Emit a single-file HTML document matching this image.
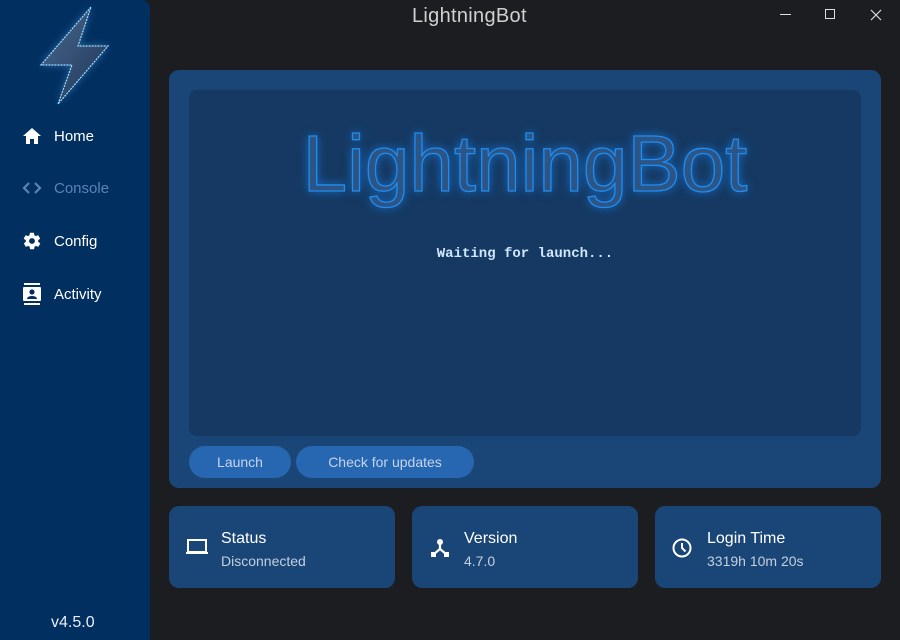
<!DOCTYPE html>
<html><head><style>
*{box-sizing:border-box;margin:0;padding:0}
body{width:900px;height:640px;background:#1c1d21;font-family:"Liberation Sans",sans-serif;position:relative;overflow:hidden;color:#fff}
.side{position:absolute;left:0;top:0;width:150px;height:640px;background:#012f60;border-radius:0 8px 0 0}
.nav{position:absolute;left:22px;font-size:15px;display:flex;align-items:center;gap:12px}
.title{position:absolute;left:412px;top:5px;font-size:20px;color:#d0d0d0;letter-spacing:.3px}
.card{position:absolute;background:#1a4677;border-radius:10px}
.inner{position:absolute;left:189px;top:90px;width:672px;height:346px;background:#153962;border-radius:8px}
.big{position:absolute;left:0;width:672px;top:28px;text-align:center;font-size:80px;font-weight:normal;color:#2c5585;-webkit-text-stroke:1.3px #1f8cf0;text-shadow:0 0 10px rgba(30,140,255,.7)}
.wait{position:absolute;top:156px;width:672px;text-align:center;font-family:"Liberation Mono",monospace;font-size:14px;color:#cfe6ff;font-weight:bold}
.btn{position:absolute;top:446px;height:32px;background:#2766b0;border-radius:16px;color:#c3d6ee;font-size:14px;display:flex;align-items:center;justify-content:center}
.st{position:absolute;top:506px;width:226px;height:82px}
.st .h{position:absolute;left:52px;top:24px;font-size:16px}
.st .s{position:absolute;left:52px;top:47px;font-size:14px;color:#c2cfdf}
.st svg{position:absolute;left:16px;top:31px}
</style></head><body>
<div class="side">
<svg style="position:absolute;left:22px;top:-6px" width="90" height="115" viewBox="-8 -6 90 115"><defs><filter id="g"><feGaussianBlur stdDeviation="4"/></filter><linearGradient id="lg" x1="0" y1="0" x2="1" y2="1"><stop offset="0" stop-color="#4a6a90"/><stop offset="1" stop-color="#1e3556"/></linearGradient></defs>
<path d="M61 7 L11 65 L42 65 L28 104 L78 46 L48 46 Z" fill="#6ab6ff" opacity=".45" filter="url(#g)"/>
<path d="M61 7 L11 65 L42 65 L28 104 L78 46 L48 46 Z" fill="url(#lg)" stroke="#9fdcff" stroke-width="1.2" stroke-dasharray="2 1"/></svg>
<div class="nav" style="top:127px"><svg width="20" height="18" viewBox="0 0 20 18"><path d="M10 1 L1 9 H4 V17 H8 V12 H12 V17 H16 V9 H19 Z" fill="#fff"/></svg><span>Home</span></div>
<div class="nav" style="top:179px;color:#5b83b8"><svg width="20" height="18" viewBox="0 0 20 18"><path d="M7 4 L2 9 L7 14 M13 4 L18 9 L13 14" stroke="#5b83b8" stroke-width="2.2" fill="none"/></svg><span>Console</span></div>
<div class="nav" style="top:231px"><svg width="20" height="20" viewBox="0 0 24 24"><path fill="#fff" d="M19.4 13c.04-.3.06-.6.06-1s-.02-.7-.06-1l2.1-1.6c.2-.15.25-.4.1-.6l-2-3.5c-.1-.2-.4-.3-.6-.2l-2.5 1c-.5-.4-1.100-.7-1.700-1l-.4-2.600c0-.2-.2-.4-.5-.4h-4c-.25 0-.45.2-.5.4l-.4 2.600c-.6.25-1.200.6-1.700 1l-2.500-1c-.2-.1-.5 0-.6.2l-2 3.500c-.1.2-.06.5.1.6L4.6 11c-.04.3-.06.7-.06 1s.02.7.06 1l-2.100 1.600c-.2.15-.25.4-.1.6l2 3.500c.1.2.4.3.6.2l2.500-1c.5.4 1.100.7 1.700 1l.4 2.600c.05.2.25.4.5.4h4c.25 0 .45-.2.5-.4l.4-2.600c.6-.25 1.200-.6 1.700-1l2.500 1c.2.1.5 0 .6-.2l2-3.500c.1-.2.06-.5-.1-.6zM12 15.500a3.500 3.500 0 1 1 0-7 3.500 3.500 0 0 1 0 7z"/></svg><span>Config</span></div>
<div class="nav" style="top:282px"><svg width="20" height="24" viewBox="0 0 20 24"><rect x="2" y="1" width="16" height="2" fill="#fff"/><rect x="2" y="21" width="16" height="2" fill="#fff"/><rect x="1" y="5" width="18" height="14" rx="1" fill="#fff"/><circle cx="10" cy="10" r="2.6" fill="#012f60"/><path d="M5 17 C5 13 15 13 15 17 Z" fill="#012f60"/></svg><span>Activity</span></div>
<div style="position:absolute;left:51px;top:614px;font-size:16px;color:#e8eef6">v4.5.0</div>
</div>
<div class="title">LightningBot</div>
<div style="position:absolute;left:780px;top:14px;width:11px;height:1px;background:#ddd"></div>
<div style="position:absolute;left:825px;top:9px;width:10px;height:10px;border:1px solid #ddd"></div>
<svg style="position:absolute;left:870px;top:9px" width="12" height="12" viewBox="0 0 12 12"><path d="M1 1 L11 11 M11 1 L1 11" stroke="#ddd" stroke-width="1.2"/></svg>
<div class="card" style="left:169px;top:70px;width:712px;height:418px"></div>
<div class="inner"><div class="big">LightningBot</div><div class="wait">Waiting for launch...</div></div>
<div class="btn" style="left:189px;width:102px">Launch</div>
<div class="btn" style="left:296px;width:178px">Check for updates</div>
<div class="card st" style="left:169px"><svg width="24" height="20" viewBox="0 0 24 20"><rect x="3" y="3" width="18" height="12" fill="none" stroke="#fff" stroke-width="2"/><rect x="1" y="15" width="22" height="2" fill="#fff"/></svg><div class="h">Status</div><div class="s">Disconnected</div></div>
<div class="card st" style="left:412px"><svg width="24" height="22" viewBox="0 0 24 22"><circle cx="12" cy="5" r="3" fill="#fff"/><path d="M12 6 V12 L6 17 M12 12 L18 17" stroke="#fff" stroke-width="2.2" fill="none"/><rect x="3" y="15" width="5" height="5" fill="#fff"/><rect x="16" y="15" width="5" height="5" fill="#fff"/></svg><div class="h">Version</div><div class="s">4.7.0</div></div>
<div class="card st" style="left:655px"><svg width="22" height="22" viewBox="0 0 22 22"><circle cx="11" cy="11" r="8.5" fill="none" stroke="#fff" stroke-width="2"/><path d="M11 6 V11 L14.500 14.500" stroke="#fff" stroke-width="2" fill="none"/></svg><div class="h">Login Time</div><div class="s">3319h 10m 20s</div></div>
</body></html>
